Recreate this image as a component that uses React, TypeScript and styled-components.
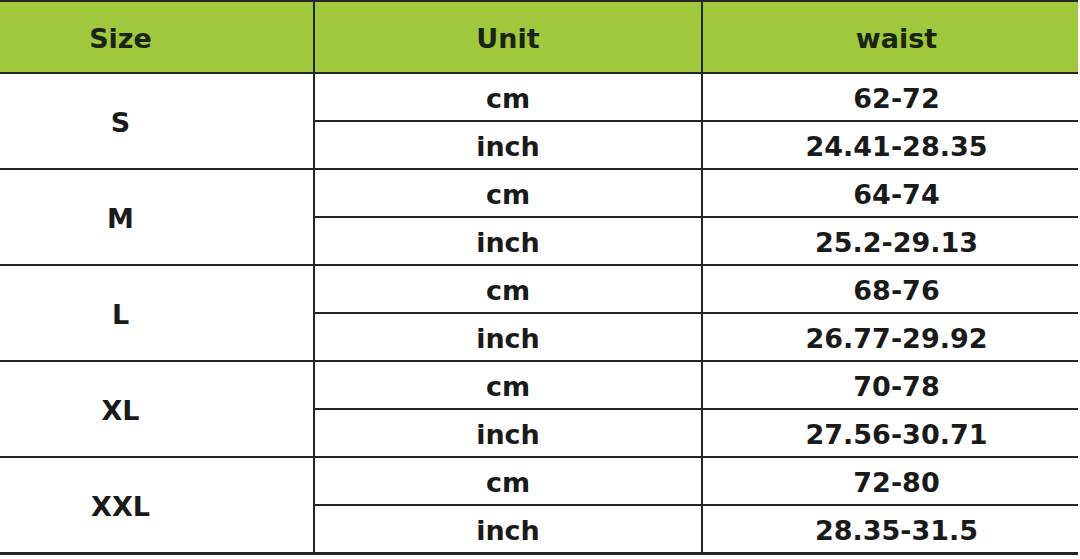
import React from "react";
import styled, { createGlobalStyle } from "styled-components";

const Global = createGlobalStyle`
  html, body { margin: 0; padding: 0; background: #ffffff; }
  body { font-family: "DejaVu Sans", "Liberation Sans", sans-serif; }
`;

const Table = styled.div`
  width: 1078px;
  display: grid;
  grid-template-columns: 313px 386px 1fr;
  grid-template-rows: 70px repeat(10, 46px);
  column-gap: 2px;
  row-gap: 2px;
  padding: 2px 0 3px 0;
  background: #262626;
`;

const Cell = styled.div<{ $head?: boolean; $offset?: number; $span?: number }>`
  display: flex;
  align-items: center;
  justify-content: center;
  background: ${(p) => (p.$head ? "#9fc83d" : "#ffffff")};
  color: ${(p) => (p.$head ? "#1a2410" : "#1a1a1a")};
  font-size: 27px;
  font-weight: 700;
  line-height: 1;
  padding-top: 2px;
  padding-left: ${(p) => (p.$offset && p.$offset > 0 ? p.$offset : 0)}px;
  padding-right: ${(p) => (p.$offset && p.$offset < 0 ? -p.$offset : 0)}px;
  grid-row: ${(p) => (p.$span ? `span ${p.$span}` : "auto")};
  white-space: nowrap;
`;

const data = [
  { size: "S", cm: "62-72", inch: "24.41-28.35" },
  { size: "M", cm: "64-74", inch: "25.2-29.13" },
  { size: "L", cm: "68-76", inch: "26.77-29.92" },
  { size: "XL", cm: "70-78", inch: "27.56-30.71" },
  { size: "XXL", cm: "72-80", inch: "28.35-31.5" },
];

export default function App() {
  return (
    <>
      <Global />
      <Table>
        <Cell $head $offset={-72}>Size</Cell>
        <Cell $head>Unit</Cell>
        <Cell $head $offset={12}>waist</Cell>
        {data.map((d) => (
          <React.Fragment key={d.size}>
            <Cell $span={2} $offset={-72}>{d.size}</Cell>
            <Cell>cm</Cell>
            <Cell $offset={12}>{d.cm}</Cell>
            <Cell>inch</Cell>
            <Cell $offset={12}>{d.inch}</Cell>
          </React.Fragment>
        ))}
      </Table>
    </>
  );
}
